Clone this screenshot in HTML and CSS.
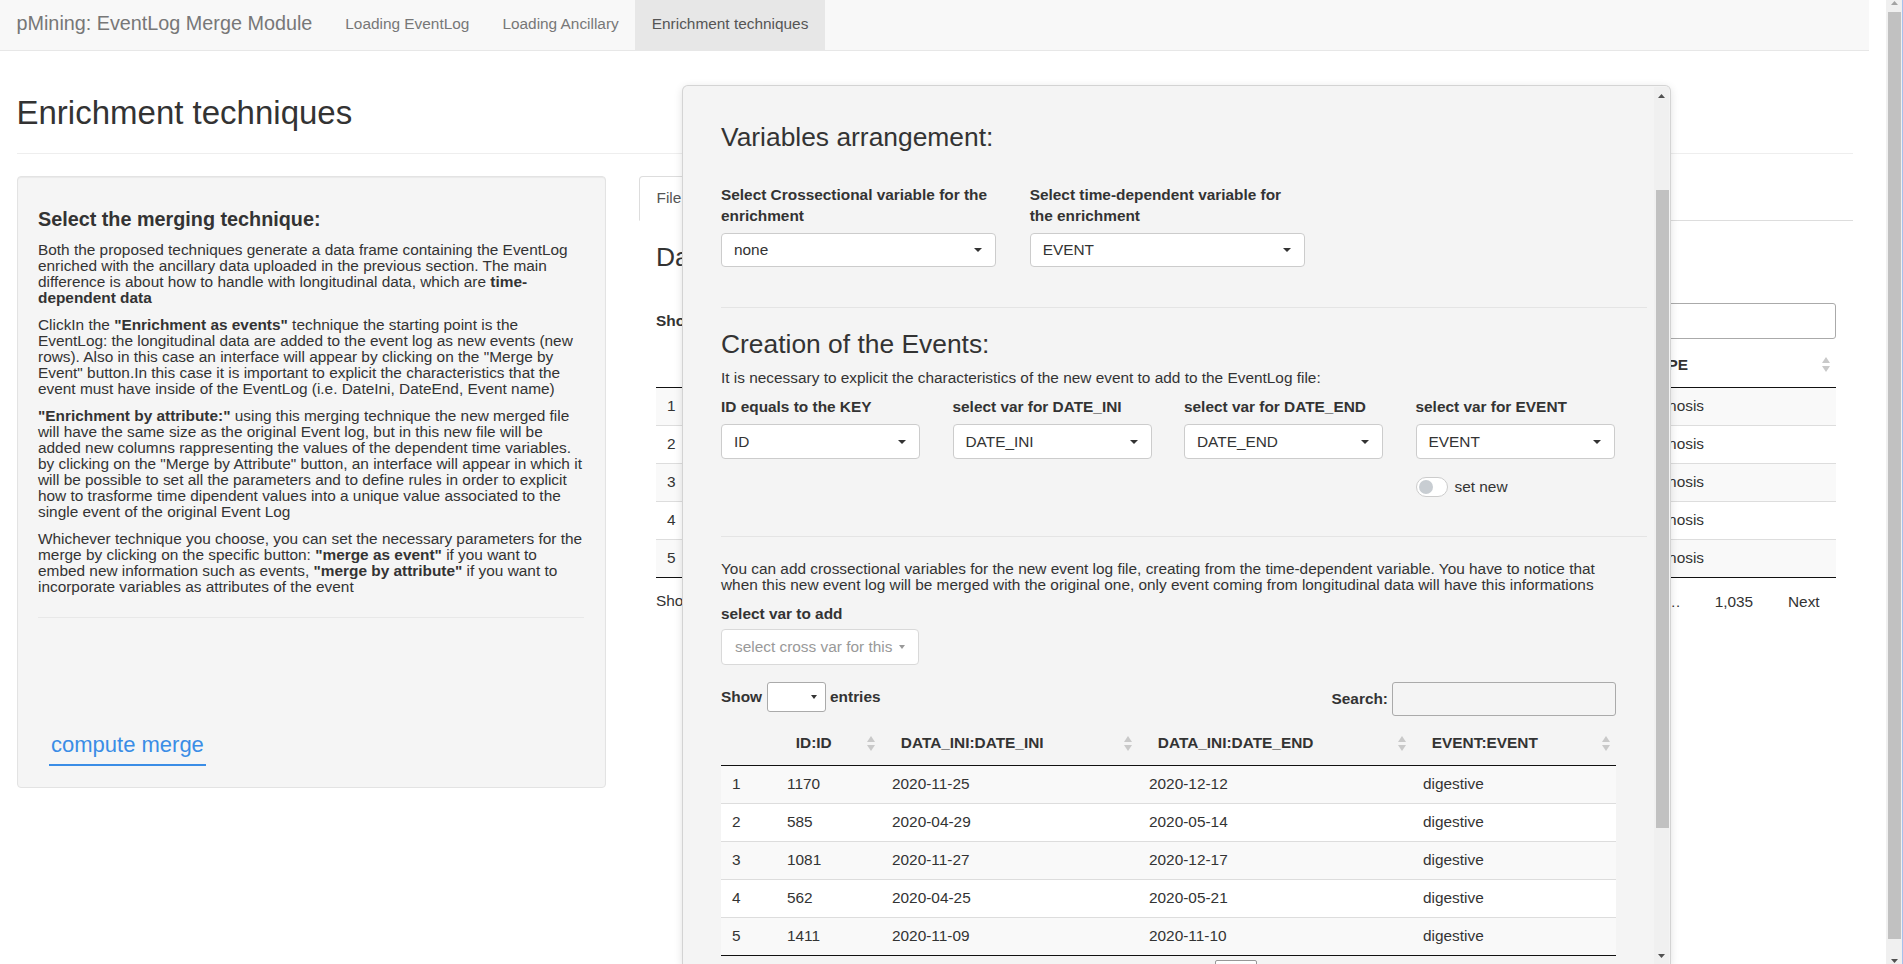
FILE: index.html
```html
<!DOCTYPE html>
<html lang="en">
<head>
<meta charset="utf-8">
<title>pMining: EventLog Merge Module</title>
<link rel="stylesheet" href="styles.css">
</head>
<body>
<div class="window">
  <div class="page">
    <nav class="navbar">
      <span class="brand">pMining: EventLog Merge Module</span>
      <ul class="nav">
        <li>Loading EventLog</li>
        <li>Loading Ancillary</li>
        <li class="active">Enrichment techniques</li>
      </ul>
    </nav>

    <div class="container">
      <h2 class="title">Enrichment techniques</h2>
      <hr class="title-rule">
      <div class="row">
        <aside class="well">
          <h4>Select the merging technique:</h4>
          <p>Both the proposed techniques generate a data frame containing the EventLog enriched with the ancillary data uploaded in the previous section. The main difference is about how to handle with longitudinal data, which are <b>time-dependent data</b></p>
          <p>ClickIn the <b>"Enrichment as events"</b> technique the starting point is the EventLog: the longitudinal data are added to the event log as new events (new rows). Also in this case an interface will appear by clicking on the "Merge by Event" button.In this case it is important to explicit the characteristics that the event must have inside of the EventLog (i.e. DateIni, DateEnd, Event name)</p>
          <p><b>"Enrichment by attribute:"</b> using this merging technique the new merged file will have the same size as the original Event log, but in this new file will be added new columns rappresenting the values of the dependent time variables. by clicking on the "Merge by Attribute" button, an interface will appear in which it will be possible to set all the parameters and to define rules in order to explicit how to trasforme time dipendent values into a unique value associated to the single event of the original Event Log</p>
          <p>Whichever technique you choose, you can set the necessary parameters for the merge by clicking on the specific button: <b>"merge as event"</b> if you want to embed new information such as events, <b>"merge by attribute"</b> if you want to incorporate variables as attributes of the event</p>
          <hr class="well-rule">
          <button class="merge-btn" type="button">compute merge</button>
        </aside>

        <main class="main">
          <ul class="tabs">
            <li class="tab active">File preview</li>
            <li class="tab">Merged EventLog</li>
          </ul>
          <div class="tab-pane">
            <h3 class="h3">Data preview</h3>
            <div class="dt-top dt-top-bg">
              <div class="dt-length">Show <span class="len-sel"><svg class="caret-s" width="6" height="4" viewBox="0 0 6 4"><path d="M0 0H6L3 4Z"/></svg></span> entries</div>
              <div class="dt-filter">Search:<span class="search search-bg"></span></div>
            </div>
            <table class="dt">
              <colgroup>
                <col class="b-c0"><col><col><col><col><col class="b-c5">
              </colgroup>
              <thead>
                <tr>
                  <th></th>
                  <th><div class="th-in"><span>ID</span><svg class="sort" width="8" height="15" viewBox="0 0 8 15"><path d="M4 0L8 6H0Z M0 9H8L4 15Z"/></svg></div></th>
                  <th><div class="th-in"><span>DATE_INI</span><svg class="sort" width="8" height="15" viewBox="0 0 8 15"><path d="M4 0L8 6H0Z M0 9H8L4 15Z"/></svg></div></th>
                  <th><div class="th-in"><span>DATE_END</span><svg class="sort" width="8" height="15" viewBox="0 0 8 15"><path d="M4 0L8 6H0Z M0 9H8L4 15Z"/></svg></div></th>
                  <th><div class="th-in"><span>EVENT</span><svg class="sort" width="8" height="15" viewBox="0 0 8 15"><path d="M4 0L8 6H0Z M0 9H8L4 15Z"/></svg></div></th>
                  <th><div class="th-in"><span>TYPE</span><svg class="sort" width="8" height="15" viewBox="0 0 8 15"><path d="M4 0L8 6H0Z M0 9H8L4 15Z"/></svg></div></th>
                </tr>
              </thead>
              <tbody>
                <tr><td>1</td><td>1170</td><td>2020-11-20</td><td>2020-11-20</td><td>visit</td><td>diagnosis</td></tr>
                <tr><td>2</td><td>585</td><td>2020-04-22</td><td>2020-04-22</td><td>visit</td><td>diagnosis</td></tr>
                <tr><td>3</td><td>1081</td><td>2020-11-21</td><td>2020-11-21</td><td>visit</td><td>diagnosis</td></tr>
                <tr><td>4</td><td>562</td><td>2020-04-18</td><td>2020-04-18</td><td>visit</td><td>diagnosis</td></tr>
                <tr><td>5</td><td>1411</td><td>2020-11-02</td><td>2020-11-02</td><td>visit</td><td>diagnosis</td></tr>
              </tbody>
            </table>
            <div class="dt-bottom">
              <div class="dt-info">Showing 1 to 5 of 5,172 entries</div>
              <div class="dt-paging">
                <span class="pbtn disabled">Previous</span>
                <span class="pbtn current">1</span>
                <span class="pbtn">2</span>
                <span class="pbtn">3</span>
                <span class="pbtn">4</span>
                <span class="pbtn">5</span>
                <span class="ellipsis">…</span>
                <span class="pbtn">1,035</span>
                <span class="pbtn">Next</span>
              </div>
            </div>
          </div>
        </main>
      </div>
    </div>

    <section class="modal">
      <div class="modal-body">
        <h3 class="m-h3">Variables arrangement:</h3>
        <div class="m-grid3">
          <div class="fld-w">
            <span class="lbl">Select Crossectional variable for the enrichment</span>
            <div class="sel"><span>none</span><svg class="caret" width="8" height="4" viewBox="0 0 8 4"><path d="M0 0H8L4 4Z"/></svg></div>
          </div>
          <div class="fld-w">
            <span class="lbl">Select time-dependent variable for the enrichment</span>
            <div class="sel"><span>EVENT</span><svg class="caret" width="8" height="4" viewBox="0 0 8 4"><path d="M0 0H8L4 4Z"/></svg></div>
          </div>
        </div>
        <hr class="m-sep m-sep1">
        <h3 class="m-h3">Creation of the Events:</h3>
        <p class="m-intro">It is necessary to explicit the characteristics of the new event to add to the EventLog file:</p>
        <div class="m-grid4">
          <div class="fld-n">
            <span class="lbl">ID equals to the KEY</span>
            <div class="sel"><span>ID</span><svg class="caret" width="8" height="4" viewBox="0 0 8 4"><path d="M0 0H8L4 4Z"/></svg></div>
          </div>
          <div class="fld-n">
            <span class="lbl">select var for DATE_INI</span>
            <div class="sel"><span>DATE_INI</span><svg class="caret" width="8" height="4" viewBox="0 0 8 4"><path d="M0 0H8L4 4Z"/></svg></div>
          </div>
          <div class="fld-n">
            <span class="lbl">select var for DATE_END</span>
            <div class="sel"><span>DATE_END</span><svg class="caret" width="8" height="4" viewBox="0 0 8 4"><path d="M0 0H8L4 4Z"/></svg></div>
          </div>
          <div class="fld-n">
            <span class="lbl">select var for EVENT</span>
            <div class="sel"><span>EVENT</span><svg class="caret" width="8" height="4" viewBox="0 0 8 4"><path d="M0 0H8L4 4Z"/></svg></div>
            <div class="switch-row"><span class="switch"><span class="knob"></span></span><span>set new</span></div>
          </div>
        </div>
        <hr class="m-sep m-sep2">
        <div class="narrow">
          <p class="m-p2">You can add crossectional variables for the new event log file, creating from the time-dependent variable. You have to notice that when this new event log will be merged with the original one, only event coming from longitudinal data will have this informations</p>
          <span class="lbl lbl-add">select var to add</span>
          <div class="picker"><span>select cross var for this</span><svg class="caret-s" width="6" height="4" viewBox="0 0 6 4"><path d="M0 0H6L3 4Z"/></svg></div>
          <div class="dt-top dt-top-m">
            <div class="dt-length dt-length-m">Show <span class="len-sel"><svg class="caret-s" width="6" height="4" viewBox="0 0 6 4"><path d="M0 0H6L3 4Z"/></svg></span> entries</div>
            <div class="dt-filter dt-filter-m">Search:<span class="search search-m"></span></div>
          </div>
          <table class="dt dt-m">
            <colgroup>
              <col class="m-c0"><col class="m-c1"><col class="m-c2"><col class="m-c3"><col class="m-c4">
            </colgroup>
            <thead>
              <tr>
                <th></th>
                <th><div class="th-in"><span>ID:ID</span><svg class="sort" width="8" height="15" viewBox="0 0 8 15"><path d="M4 0L8 6H0Z M0 9H8L4 15Z"/></svg></div></th>
                <th><div class="th-in"><span>DATA_INI:DATE_INI</span><svg class="sort" width="8" height="15" viewBox="0 0 8 15"><path d="M4 0L8 6H0Z M0 9H8L4 15Z"/></svg></div></th>
                <th><div class="th-in"><span>DATA_INI:DATE_END</span><svg class="sort" width="8" height="15" viewBox="0 0 8 15"><path d="M4 0L8 6H0Z M0 9H8L4 15Z"/></svg></div></th>
                <th><div class="th-in"><span>EVENT:EVENT</span><svg class="sort" width="8" height="15" viewBox="0 0 8 15"><path d="M4 0L8 6H0Z M0 9H8L4 15Z"/></svg></div></th>
              </tr>
            </thead>
            <tbody>
              <tr><td>1</td><td>1170</td><td>2020-11-25</td><td>2020-12-12</td><td>digestive</td></tr>
              <tr><td>2</td><td>585</td><td>2020-04-29</td><td>2020-05-14</td><td>digestive</td></tr>
              <tr><td>3</td><td>1081</td><td>2020-11-27</td><td>2020-12-17</td><td>digestive</td></tr>
              <tr><td>4</td><td>562</td><td>2020-04-25</td><td>2020-05-21</td><td>digestive</td></tr>
              <tr><td>5</td><td>1411</td><td>2020-11-09</td><td>2020-11-10</td><td>digestive</td></tr>
            </tbody>
          </table>
          <div class="dt-bottom">
            <div class="dt-info">Showing 1 to 5 of 5,142 entries</div>
            <div class="dt-paging">
              <span class="pbtn disabled">Previous</span>
              <span class="pbtn current">1</span>
              <span class="pbtn">2</span>
              <span class="pbtn">3</span>
              <span class="pbtn">4</span>
              <span class="pbtn">5</span>
              <span class="ellipsis">…</span>
              <span class="pbtn">1,029</span>
              <span class="pbtn">Next</span>
            </div>
          </div>
        </div>
      </div>
      <div class="mscroll">
        <div class="msb-arrow"><svg width="7" height="4" viewBox="0 0 7 4"><path d="M3.5 0L7 4H0Z" fill="#505050"/></svg></div>
        <div class="msb-track"><div class="msb-thumb"></div></div>
        <div class="msb-arrow"><svg width="7" height="4" viewBox="0 0 7 4"><path d="M0 0H7L3.5 4Z" fill="#505050"/></svg></div>
      </div>
    </section>
  </div>

  <div class="page-scrollbar">
    <div class="psb-top"><svg width="7" height="4" viewBox="0 0 7 4"><path d="M3.5 0L7 4H0Z" fill="#a3a3a3"/></svg></div>
    <div class="psb-thumb"></div>
    <div class="psb-bottom"><svg width="7" height="4" viewBox="0 0 7 4"><path d="M0 0H7L3.5 4Z" fill="#505050"/></svg></div>
  </div>
</div>
</body>
</html>
```

FILE: styles.css
```css
* { box-sizing: border-box; }

html, body {
  margin: 0;
  width: 1903px;
  height: 964px;
  overflow: hidden;
}

body {
  font-family: "Liberation Sans", Arial, Helvetica, sans-serif;
  font-size: 15.4px;
  line-height: 22px;
  color: #333;
  background: #fff;
}

b { font-weight: bold; }

.window {
  display: flex;
  width: 1903px;
  height: 964px;
}

.page {
  position: relative;
  flex: 1 1 auto;
  min-width: 0;
  padding-right: 17px;
  overflow: hidden;
}

/* ---------- navbar ---------- */
.navbar {
  display: flex;
  height: 51px;
  background: #f8f8f8;
  border-bottom: 1px solid #e7e7e7;
}

.brand {
  padding: 0 16.5px;
  font-size: 19.8px;
  line-height: 47px;
  color: #777;
  white-space: nowrap;
}

.nav {
  display: flex;
  margin: 0;
  padding: 0;
  list-style: none;
}

.nav li {
  height: 50px;
  padding: 0 16.5px;
  line-height: 48px;
  color: #777;
  white-space: nowrap;
}

.nav li.active {
  background: #e7e7e7;
  color: #555;
}

/* ---------- page ---------- */
.container { padding: 0 16.5px; }

.title {
  margin: 44.4px 0 0;
  font-size: 33px;
  line-height: 36.3px;
  font-weight: normal;
  color: #333;
}

.title-rule {
  margin: 21.3px 0 0;
  height: 0;
  border: 0;
  border-top: 1px solid #eee;
}

.row {
  display: grid;
  grid-template-columns: 589px 1fr;
  column-gap: 33.5px;
  align-items: start;
  margin-top: 22px;
}

/* ---------- sidebar well ---------- */
.well {
  padding: 21px 20.5px;
  background: #f5f5f5;
  border: 1px solid #e3e3e3;
  border-radius: 4px;
  box-shadow: inset 0 1px 1px rgba(0, 0, 0, 0.05);
}

.well h4 {
  margin: 11px 0;
  font-size: 19.8px;
  line-height: 21.8px;
  font-weight: bold;
}

.well p {
  margin: 0 0 11px;
  line-height: 16px;
}

.well-rule {
  margin: 22px 0 0;
  height: 0;
  border: 0;
  border-top: 1px solid #e8e8e8;
}

.merge-btn {
  display: block;
  margin: 109px 0 0 11px;
  padding: 6px 2px 7.5px;
  font-family: inherit;
  font-size: 22px;
  line-height: 24.2px;
  color: #3a8de6;
  background: none;
  border: 0;
  border-bottom: 2px solid #3a8de6;
  border-radius: 0;
}

/* ---------- main column ---------- */
.tabs {
  display: flex;
  margin: 0;
  padding: 0;
  list-style: none;
  border-bottom: 1px solid #ddd;
}

.tab {
  margin: 0 2px -1px 0;
  padding: 10.5px 16.5px;
  border: 1px solid transparent;
  border-radius: 4px 4px 0 0;
  color: #337ab7;
  white-space: nowrap;
}

.tab.active {
  color: #555;
  background: #fff;
  border-color: #ddd #ddd transparent;
}

.tab-pane { padding: 0 16.5px 0 17px; }

.h3 {
  margin: 22px 0 0;
  font-size: 26.4px;
  line-height: 29px;
  font-weight: normal;
}

/* ---------- datatables ---------- */
.dt-top {
  display: flex;
  justify-content: space-between;
}

.dt-top-bg {
  margin-top: 31px;
  height: 36px;
  align-items: center;
}

.dt-top-m {
  margin-top: 17px;
  height: 34px;
  align-items: flex-start;
}

.dt-length,
.dt-filter {
  display: flex;
  align-items: center;
  font-weight: bold;
  white-space: nowrap;
}

.dt-length { gap: 4.5px; }
.dt-filter { gap: 4px; }
.dt-length-m { height: 30px; }
.dt-filter-m { height: 34px; }

.len-sel {
  display: flex;
  align-items: center;
  justify-content: flex-end;
  width: 59px;
  height: 30px;
  padding-right: 8px;
  background: #fff;
  border: 1px solid #aaa;
  border-radius: 3px;
}

.caret-s { fill: #333; }

.search {
  display: block;
  width: 224px;
  border: 1px solid #aaa;
  border-radius: 3px;
  background: transparent;
}

.search-bg { height: 36px; }
.search-m { height: 34px; }

.dt {
  width: 100%;
  table-layout: fixed;
  border-collapse: separate;
  border-spacing: 0;
  border-bottom: 1px solid #111;
  margin-top: 5px;
}

.dt-m { margin-top: 6px; }

.dt th {
  padding: 10px 6px 11px 19.8px;
  text-align: left;
  font-weight: bold;
  line-height: 22px;
  border-bottom: 1px solid #111;
  white-space: nowrap;
}

.th-in {
  display: flex;
  justify-content: space-between;
  align-items: center;
}

.sort { fill: #c9c9c9; flex: none; }

.dt td {
  padding: 7px 11px 8px;
  line-height: 22px;
  border-top: 1px solid #ddd;
  white-space: nowrap;
  overflow: hidden;
}

.dt tbody tr:first-child td { border-top: 0; }
.dt tbody tr:nth-child(odd) { background: #f9f9f9; }
.dt tbody tr:nth-child(even) { background: #fff; }

.b-c0 { width: 60px; }
.b-c5 { width: 208px; }

.m-c0 { width: 55px; }
.m-c1 { width: 105px; }
.m-c2 { width: 257px; }
.m-c3 { width: 274px; }
.m-c4 { width: 204px; }

.dt-bottom {
  display: flex;
  justify-content: space-between;
  align-items: flex-start;
}

.dt-info {
  padding-top: 11.6px;
  white-space: nowrap;
}

.dt-paging {
  display: flex;
  padding-top: 3.85px;
  white-space: nowrap;
}

.pbtn {
  margin-left: 2px;
  padding: 7.7px 15.4px;
  min-width: 23.1px;
  text-align: center;
  color: #333;
  border: 1px solid transparent;
  border-radius: 2px;
}

.pbtn.disabled { color: #666; }

.pbtn.current {
  border-color: #979797;
  background: linear-gradient(#fff, #dcdcdc);
}

.ellipsis { padding: 8.7px 15.4px; }

/* ---------- modal ---------- */
.modal {
  position: absolute;
  left: 682px;
  top: 85px;
  width: 989px;
  height: 879px;
  display: flex;
  background: #f4f4f4;
  border: 1px solid rgba(0, 0, 0, 0.13);
  border-bottom: 0;
  border-radius: 6px 6px 0 0;
  box-shadow: 0 2px 8px rgba(0, 0, 0, 0.12);
  overflow: hidden;
}

.modal-body {
  flex: 1 1 auto;
  min-width: 0;
  padding: 37px 7px 0 38px;
}

.m-h3 {
  margin: 0;
  font-size: 26.4px;
  line-height: 29px;
  font-weight: normal;
}

.m-grid3 {
  display: grid;
  grid-template-columns: repeat(3, 1fr);
  margin-top: 32px;
}

.m-grid4 {
  display: grid;
  grid-template-columns: repeat(4, 1fr);
}

.fld-w { width: 275px; }
.fld-n { width: 199px; }

.lbl {
  display: block;
  font-weight: bold;
  line-height: 21px;
  margin-bottom: 7px;
}

.m-grid4 .lbl { margin-bottom: 7px; }
.lbl-add { margin-bottom: 5px; }

.sel {
  display: flex;
  align-items: center;
  justify-content: space-between;
  height: 34px;
  padding: 0 13px 0 12px;
  background: #fff;
  border: 1px solid #ccc;
  border-radius: 4px;
  white-space: nowrap;
}

.m-grid4 .sel { height: 35px; }

.caret { fill: #333; flex: none; }

.m-sep {
  height: 0;
  border: 0;
  border-top: 1px solid #e4e4e4;
}

.m-sep1 { margin: 40px 0 22px; }
.m-sep2 { margin: 39px 0 23.5px; }

.m-intro {
  margin: 11px 0 10px;
  line-height: 16px;
}

.switch-row {
  display: flex;
  align-items: center;
  gap: 7px;
  height: 20px;
  margin-top: 18px;
}

.switch {
  display: block;
  width: 32px;
  height: 20px;
  padding: 2px;
  background: #fff;
  border: 1px solid #ccc;
  border-radius: 10px;
}

.knob {
  display: block;
  width: 14px;
  height: 14px;
  border-radius: 50%;
  background: #c8cdd2;
}

.narrow { width: 895px; }

.m-p2 {
  margin: 0 0 10.5px;
  line-height: 16px;
}

.picker {
  display: flex;
  align-items: center;
  justify-content: space-between;
  width: 198px;
  height: 36px;
  padding: 0 13px;
  color: #999;
  background: #fff;
  border: 1px solid #d9d9d9;
  border-radius: 4px;
  white-space: nowrap;
}

.picker .caret-s { fill: #999; }

/* modal scrollbar */
.mscroll {
  flex: none;
  width: 15px;
  margin: 1px 1px 0 0;
  background: #f0f0f0;
  display: flex;
  flex-direction: column;
}

.msb-arrow {
  flex: none;
  height: 17px;
  display: flex;
  align-items: center;
  justify-content: center;
}

.msb-track { flex: 1 1 auto; }

.msb-thumb {
  margin: 86px 0 0 2px;
  height: 638px;
  background: #c1c1c1;
}

/* page scrollbar */
.page-scrollbar {
  flex: none;
  width: 17px;
  display: flex;
  flex-direction: column;
  background: #f0f0f0;
  border-right: 1px solid #a6c1ec;
}

.psb-top {
  flex: none;
  height: 12px;
  display: flex;
  justify-content: center;
  padding: 1px 0 0 1px;
}

.psb-thumb {
  flex: 1 1 auto;
  margin: 0 1px 0 2px;
  background: #c1c1c1;
}

.psb-bottom {
  flex: none;
  height: 25px;
  display: flex;
  align-items: flex-end;
  justify-content: center;
  padding: 0 0 1px 1px;
}
```
